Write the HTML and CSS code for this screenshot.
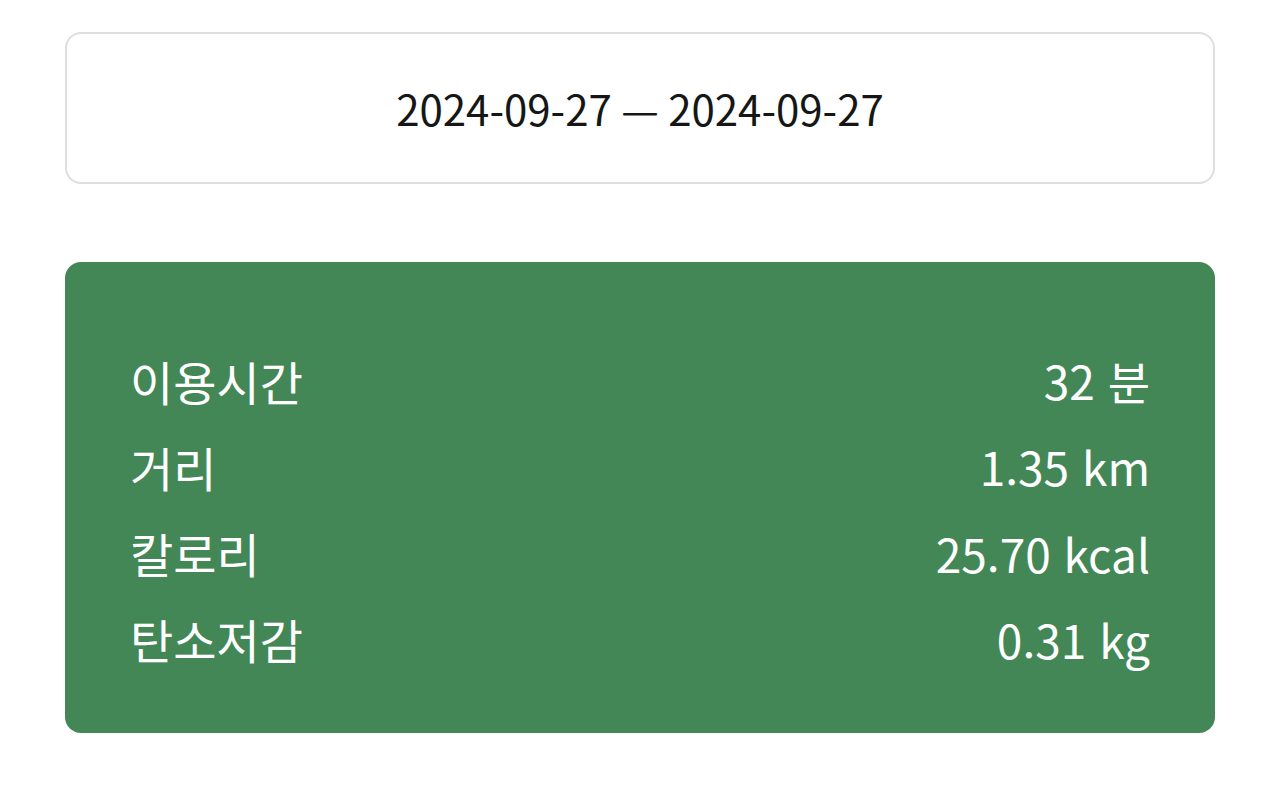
FILE: index.html
```html
<!DOCTYPE html>
<html lang="ko">
<head>
<meta charset="utf-8">
<link rel="stylesheet" href="styles.css">
</head>
<body>
<main class="page">
  <div class="date-box">2024-09-27 — 2024-09-27</div>
  <section class="stats">
    <div class="row"><span class="label">이용시간</span><span class="value">32 분</span></div>
    <div class="row"><span class="label">거리</span><span class="value">1.35 km</span></div>
    <div class="row"><span class="label">칼로리</span><span class="value">25.70 kcal</span></div>
    <div class="row"><span class="label">탄소저감</span><span class="value">0.31 kg</span></div>
  </section>
</main>
</body>
</html>
```
FILE: styles.css
```css
html, body {
  margin: 0;
  padding: 0;
  background: #ffffff;
}
body {
  font-family: "Noto Sans CJK KR", "Noto Sans", sans-serif;
}
.page {
  padding: 32px 65px 0 65px;
  display: flex;
  flex-direction: column;
  gap: 78px;
}
.date-box {
  height: 152px;
  box-sizing: border-box;
  border: 2px solid #dedede;
  border-radius: 16px;
  display: flex;
  align-items: center;
  justify-content: center;
  font-size: 42px;
  color: #161616;
  padding-bottom: 2px;
}
.stats {
  background: #438757;
  border-radius: 16px;
  height: 471px;
  box-sizing: border-box;
  padding: 75px 65px 51px 65px;
  display: flex;
  flex-direction: column;
  color: #ffffff;
  font-size: 46px;
}
.row {
  display: flex;
  justify-content: space-between;
  align-items: center;
  height: 86.5px;
}
.label {
  font-size: 47px;
}
```
